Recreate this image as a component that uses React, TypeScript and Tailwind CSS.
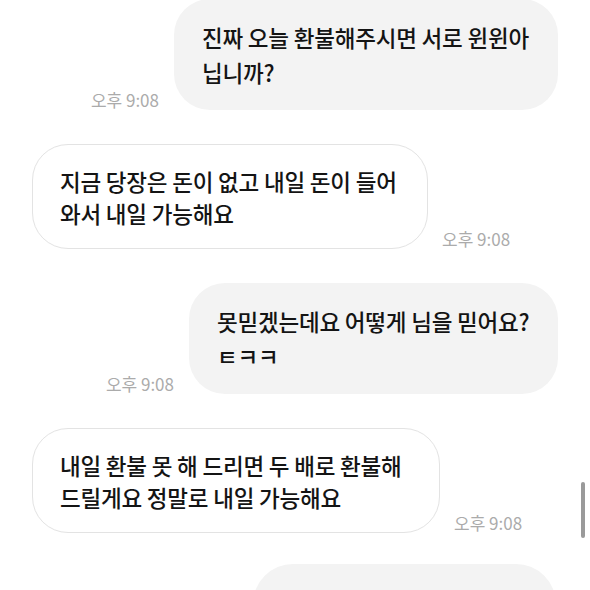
type Msg = {
  mine: boolean
  lines: string[]
  width: string
}

const messages: Msg[] = [
  { mine: true, lines: ['진짜 오늘 환불해주시면 서로 윈윈아', '닙니까?'], width: 'w-[384px]' },
  { mine: false, lines: ['지금 당장은 돈이 없고 내일 돈이 들어', '와서 내일 가능해요'], width: 'w-[396px]' },
  { mine: true, lines: ['못믿겠는데요 어떻게 님을 믿어요?', 'ㅌㅋㅋ'], width: 'w-[369px]' },
  { mine: false, lines: ['내일 환불 못 해 드리면 두 배로 환불해', '드릴게요 정말로 내일 가능해요'], width: 'w-[408px]' },
]

function Time() {
  return <span className="shrink-0 text-[17px] leading-5 text-[#ababab]">오후 9:08</span>
}

function Bubble({ msg }: { msg: Msg }) {
  const base = 'rounded-[36px] text-[22.5px] font-medium tracking-[-0.2px] text-[#141414] whitespace-nowrap ' + msg.width
  const look = msg.mine
    ? 'bg-[#f3f3f3] px-[28px] pt-[21px] pb-[20px] leading-[35px]'
    : 'bg-white border border-[#e3e3e3] px-[27px] pt-[20px] pb-[19px] leading-[32px]'
  return (
    <div className={base + ' ' + look}>
      {msg.lines.map((l, i) => (
        <div key={i}>{l}</div>
      ))}
    </div>
  )
}

export default function App() {
  return (
    <div
      className="relative h-[590px] w-[590px] overflow-hidden bg-white"
      style={{ fontFamily: '"Noto Sans CJK KR", "Noto Sans", sans-serif' }}
    >
      <div className="flex flex-col gap-[34px] -mt-[1px] pl-[32px] pr-[32px]">
        {messages.map((m, i) =>
          m.mine ? (
            <div key={i} className="flex items-end justify-end gap-[15px]">
              <Time />
              <Bubble msg={m} />
            </div>
          ) : (
            <div key={i} className="flex items-end gap-[14px]">
              <Bubble msg={m} />
              <Time />
            </div>
          )
        )}
        <div className="flex justify-end -mt-[3px] pr-[2px]">
          <div className="h-[80px] w-[303px] rounded-[40px] bg-[#f3f3f3]" />
        </div>
      </div>
      <div className="absolute left-[581px] top-[482px] h-[56px] w-[4px] rounded-full bg-[#9a9a9a]" />
    </div>
  )
}
